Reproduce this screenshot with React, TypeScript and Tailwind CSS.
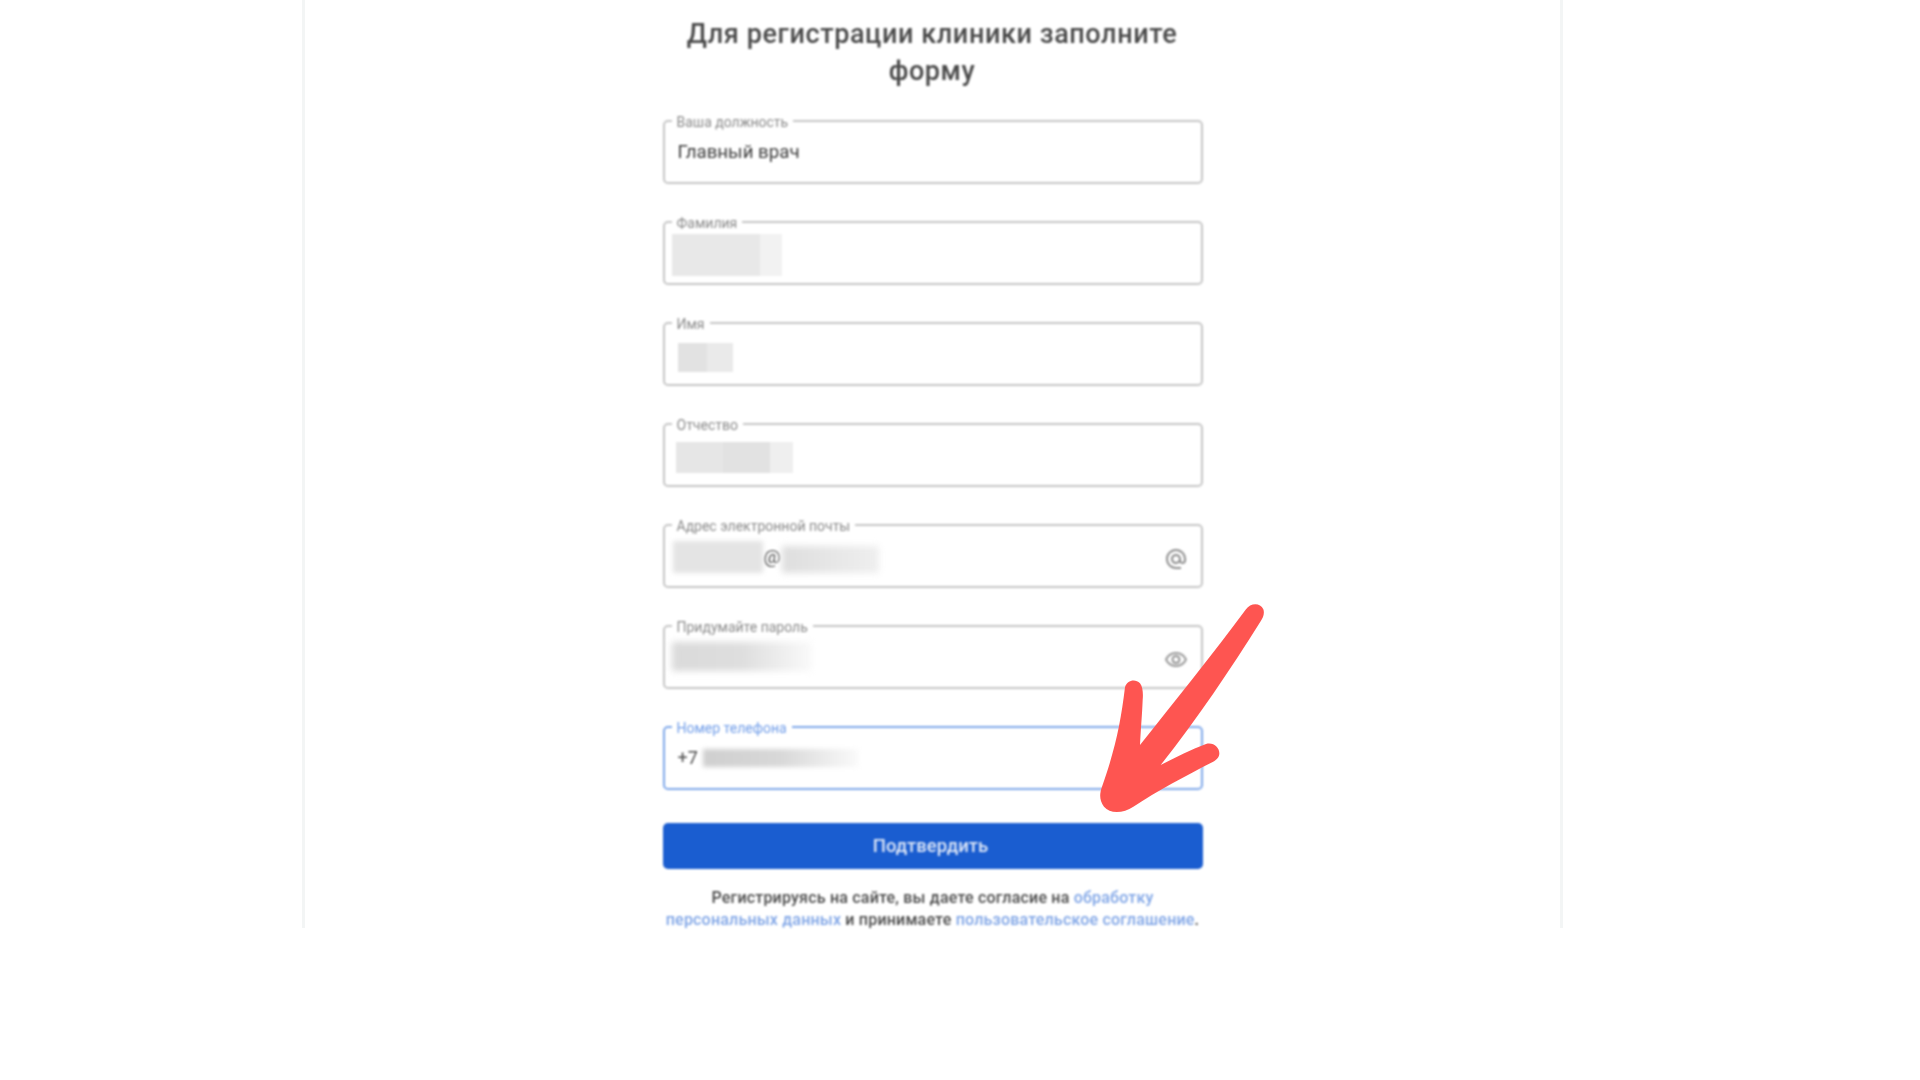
import { MdOutlineAlternateEmail, MdOutlineVisibility } from "react-icons/md";
import type { ReactNode } from "react";

function Field({
  label,
  focused,
  pad,
  icon,
  children,
}: {
  label: string;
  focused?: boolean;
  pad: string;
  icon?: ReactNode;
  children: ReactNode;
}) {
  return (
    <fieldset
      className={`relative flex h-[72px] w-full rounded-[5px] border-2 ${
        focused ? "border-[#7fa8ea]" : "border-[#c6c6c6]"
      }`}
    >
      <legend
        className={`ml-[7px] px-[5px] pt-[2px] text-[14px] leading-[16px] ${
          focused ? "text-[#6f9ce8]" : "text-[#8a8a8a]"
        }`}
      >
        {label}
      </legend>
      <div className={`flex w-full items-start pl-[13px] pr-[13px] ${pad}`}>
        <div className="flex min-w-0 flex-1 items-start">{children}</div>
        {icon}
      </div>
    </fieldset>
  );
}

function Arrow() {
  return (
    <svg
      className="absolute left-[795px] top-[590px] h-[240px] w-[180px]"
      viewBox="0 0 540 720"
      fill="#fe5551"
    >
      <path d="M438 58 C450 40 480 36 490 58 C494 70 490 82 482 94 C390 240 290 390 182 525 C225 503 270 480 318 462 C340 456 358 472 358 490 C358 502 350 510 338 516 C260 556 170 604 100 650 C70 670 30 672 12 650 C-2 632 -2 612 6 590 C45 480 62 400 75 292 C80 272 105 264 120 280 C128 290 130 310 128 330 C126 380 122 420 120 465 C220 340 340 190 438 58 Z" />
    </svg>
  );
}

export default function App() {
  return (
    <div className="min-h-[1080px] bg-white" style={{ fontFamily: "Roboto, 'Liberation Sans', sans-serif" }}>
      <div className="relative ml-[302px] h-[928px] w-[1261px] border-x-[3px] border-[#f3f5f5]">
        <div className="flex flex-col items-center blur-[0.8px]">
          <h1 className="mb-[22px] ml-[-1px] w-[540px] pt-[16px] text-center text-[27px] font-medium leading-[37px] tracking-[0.6px] text-[#4a4a4a]">
            Для регистрации клиники заполните
            <br />
            форму
          </h1>
          <form className="flex w-[540px] flex-col gap-[29px]">
            <Field label="Ваша должность" pad="pt-[10px]">
              <span className="text-[18.7px] leading-[24px] text-[#3c3c3c]">Главный врач</span>
            </Field>
            <Field label="Фамилия" pad="pt-[3px]">
              <div className="ml-[-6px] flex h-[42px]">
                <div className="w-[88px] bg-[#e8e8e8]" />
                <div className="w-[22px] bg-[#f2f2f2]" />
              </div>
            </Field>
            <Field label="Имя" pad="pt-[11px]">
              <div className="flex h-[29px]">
                <div className="w-[29px] bg-[#e2e2e2]" />
                <div className="w-[26px] bg-[#eaeaea]" />
              </div>
            </Field>
            <Field label="Отчество" pad="pt-[9px]">
              <div className="ml-[-2px] flex h-[31px]">
                <div className="w-[47px] bg-[#e6e6e6]" />
                <div className="w-[47px] bg-[#e2e2e2]" />
                <div className="w-[23px] bg-[#efefef]" />
              </div>
            </Field>
            <Field
              label="Адрес электронной почты"
              pad="pt-[7px]"
              icon={<MdOutlineAlternateEmail className="mt-[6px] shrink-0 text-[#8e8e8e]" size={24} />}
            >
              <div className="ml-[-5px] flex items-center">
                <div className="h-[32px] w-[90px] bg-[#e4e4e4] blur-[2px]" />
                <span className="w-[19px] text-center text-[19px] leading-[22px] text-[#555555]">@</span>
                <div className="mt-[5px] h-[27px] w-[97px] bg-gradient-to-r from-[#dedede] to-[#efefef] blur-[3px]" />
              </div>
            </Field>
            <Field
              label="Придумайте пароль"
              pad="pt-[7px]"
              icon={<MdOutlineVisibility className="mt-[6px] shrink-0 text-[#959595]" size={24} />}
            >
              <div className="ml-[-6px] h-[29px] w-[140px] bg-gradient-to-r from-[#dadada] via-[#dedede] to-[#fafafa] blur-[3px]" />
            </Field>
            <Field label="Номер телефона" focused pad="pt-[10px]">
              <span className="text-[18px] leading-[24px] text-[#4a4a4a]">+7</span>
              <div className="ml-[5px] mt-[3px] h-[18px] w-[155px] bg-gradient-to-r from-[#cfcfcf] via-[#d8d8d8] to-[#fafafa] blur-[2px]" />
            </Field>
            <button
              type="button"
              className="mt-[4px] h-[46px] w-full rounded-[5px] bg-[#1a5dd0] pr-[4px] pt-[2px] text-[18.5px] font-medium text-[#dfe8f8]"
            >
              Подтвердить
            </button>
          </form>
          <p className="mt-[18px] w-[560px] text-center text-[16px] font-medium leading-[22px] tracking-[0.2px] text-[#4a4a4a]">
            Регистрируясь на сайте, вы даете согласие на <a className="text-[#7ea4e6]">обработку</a>
            <br />
            <a className="text-[#7ea4e6]">персональных данных</a> и принимаете{" "}
            <a className="text-[#7ea4e6]">пользовательское соглашение</a>.
          </p>
        </div>
        <Arrow />
      </div>
    </div>
  );
}
